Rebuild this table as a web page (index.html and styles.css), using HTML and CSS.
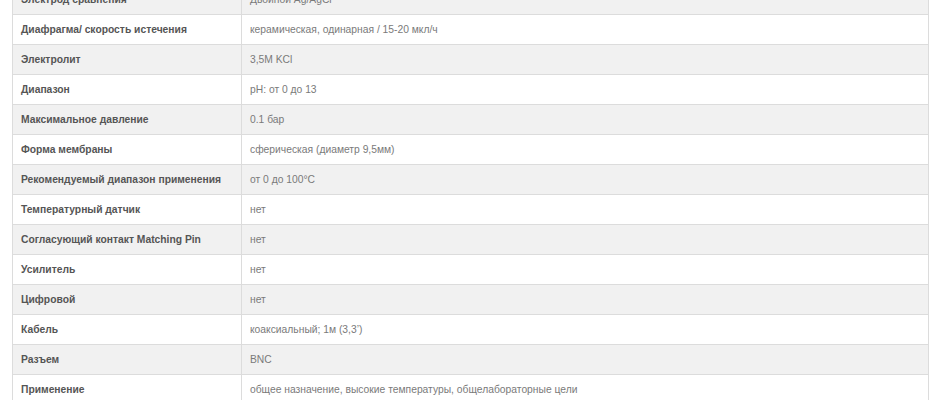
FILE: index.html
```html
<!DOCTYPE html>
<html lang="ru">

<head>
    <meta charset="UTF-8">
    <meta name="viewport" content="width=device-width, initial-scale=1.0">
    <title>Характеристики электрода</title>
    <link rel="stylesheet" href="styles.css">
</head>

<body>
    <div class="specs">
        <table class="specs-table">
            <tbody>
                <tr><td class="label">Электрод сравнения</td><td class="value">Двойной Ag/AgCl</td></tr>
                <tr><td class="label">Диафрагма/ скорость истечения</td><td class="value">керамическая, одинарная / 15-20 мкл/ч</td></tr>
                <tr><td class="label">Электролит</td><td class="value">3,5M KCl</td></tr>
                <tr><td class="label">Диапазон</td><td class="value">pH: от 0 до 13</td></tr>
                <tr><td class="label">Максимальное давление</td><td class="value">0.1 бар</td></tr>
                <tr><td class="label">Форма мембраны</td><td class="value">сферическая (диаметр 9,5мм)</td></tr>
                <tr><td class="label">Рекомендуемый диапазон применения</td><td class="value">от 0 до 100°C</td></tr>
                <tr><td class="label">Температурный датчик</td><td class="value">нет</td></tr>
                <tr><td class="label">Согласующий контакт Matching Pin</td><td class="value">нет</td></tr>
                <tr><td class="label">Усилитель</td><td class="value">нет</td></tr>
                <tr><td class="label">Цифровой</td><td class="value">нет</td></tr>
                <tr><td class="label">Кабель</td><td class="value">коаксиальный; 1м (3,3’)</td></tr>
                <tr><td class="label">Разъем</td><td class="value">BNC</td></tr>
                <tr><td class="label">Применение</td><td class="value">общее назначение, высокие температуры, общелабораторные цели</td></tr>
            </tbody>
        </table>
    </div>
</body>

</html>
```

FILE: styles.css
```css
* {
    margin: 0;
    padding: 0;
    box-sizing: border-box;
}

body {
    font-family: "Liberation Sans", Arial, sans-serif;
    background: #ffffff;
    overflow: hidden;
}

.specs {
    padding: 0 11px 0 12px;
    margin-top: -16px;
}

.specs-table {
    width: 917px;
    border-collapse: collapse;
    font-size: 10.3px;
}

.specs-table td {
    height: 30px;
    padding: 0 8px;
    border: 1px solid #dcdcdc;
    vertical-align: middle;
    white-space: nowrap;
}

.specs-table tr:nth-child(odd) {
    background: #f1f1f1;
}

.label {
    width: 229px;
    font-weight: bold;
    color: #555555;
}

.value {
    color: #7a7a7a;
}
```
